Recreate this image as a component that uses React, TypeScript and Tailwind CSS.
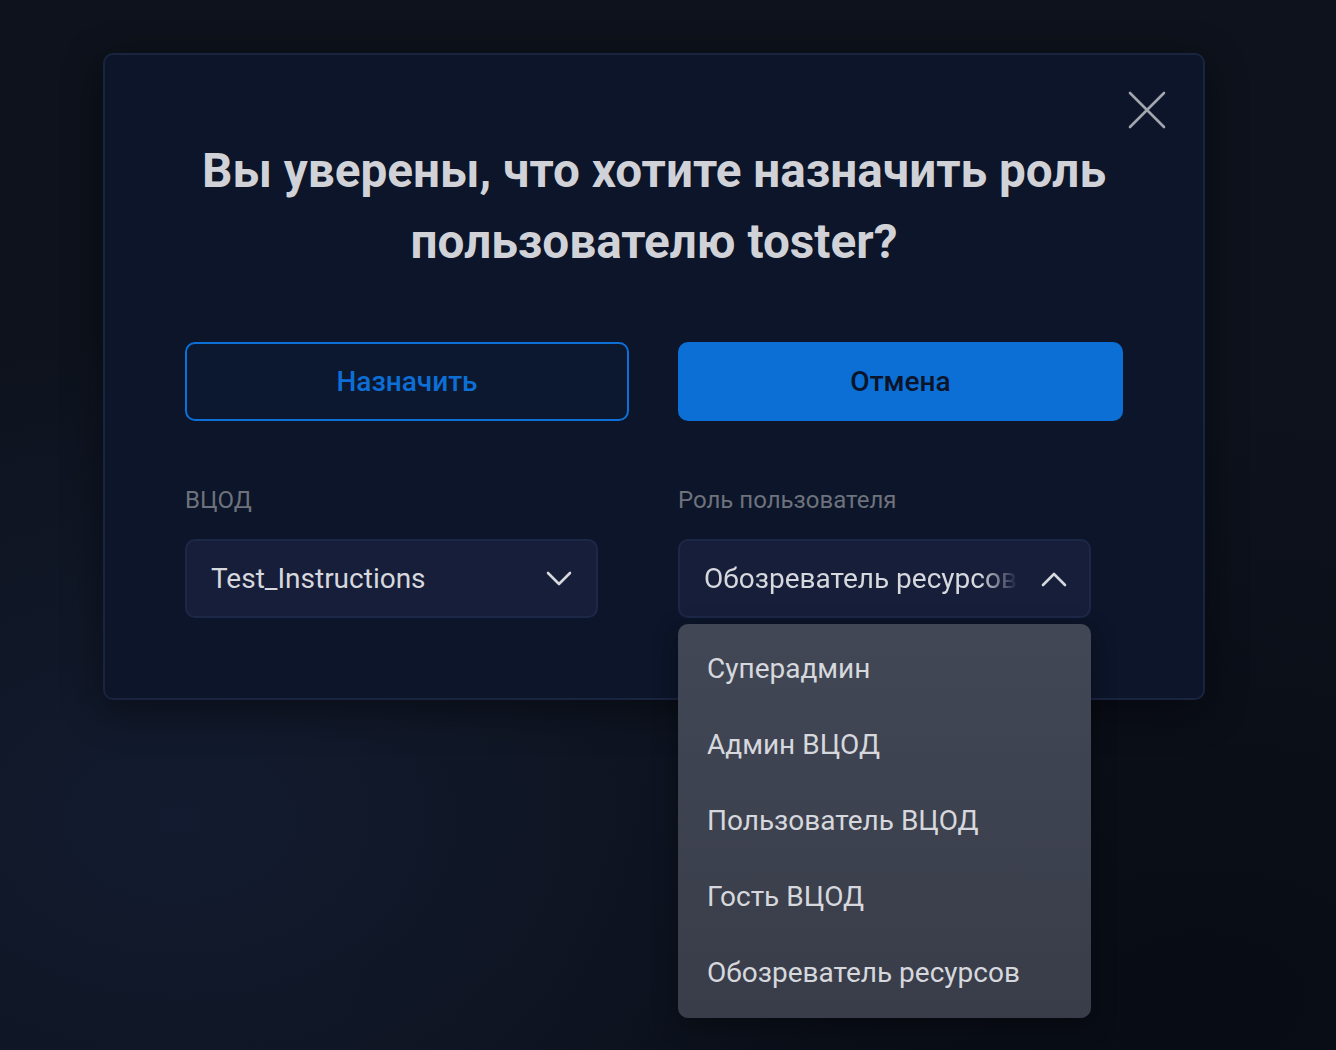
import { useState } from "react";

const roles = [
  "Суперадмин",
  "Админ ВЦОД",
  "Пользователь ВЦОД",
  "Гость ВЦОД",
  "Обозреватель ресурсов",
];

function Chevron({ up = false }: { up?: boolean }) {
  return (
    <svg width="26" height="16" viewBox="0 0 26 16" fill="none" className="shrink-0">
      <path
        d={up ? "M2 14 L13 3 L24 14" : "M2 2 L13 13 L24 2"}
        stroke="#d6d8dd"
        strokeWidth="2.6"
        strokeLinecap="round"
        strokeLinejoin="round"
      />
    </svg>
  );
}

export default function App() {
  const [role, setRole] = useState("Обозреватель ресурсов");
  const [open, setOpen] = useState(true);

  return (
    <div className="min-h-[1050px] w-full bg-[#0d121c] bg-[radial-gradient(ellipse_700px_500px_at_180px_820px,#121b2f_0%,transparent_100%),radial-gradient(ellipse_900px_600px_at_1200px_1000px,#080c15_0%,transparent_100%)] font-['Roboto','Liberation_Sans',sans-serif] pt-[53px] pl-[103px]">
      <div className="relative w-[1102px] rounded-[10px] border-2 border-[#19243f] bg-[#0c1529] px-[80px] pt-[81px] pb-[80px] shadow-[0_10px_40px_rgba(0,0,0,0.45)]">
        <button className="absolute right-[37px] top-[36px] p-0">
          <svg width="38" height="38" viewBox="0 0 38 38" fill="none">
            <path d="M2 2 L36 36 M36 2 L2 36" stroke="#a3a6ad" strokeWidth="2.6" strokeLinecap="round" />
          </svg>
        </button>

        <h2 className="text-center text-[47.7px] font-bold leading-[71px] text-[#d0d2d7]">
          Вы уверены, что хотите назначить роль
          <br />
          пользователю toster?
        </h2>

        <div className="mt-[64px] grid grid-cols-[444px_445px] gap-x-[49px]">
          <button className="h-[79px] rounded-[10px] border-2 border-[#0c70d8] bg-[#0c1830] text-[28px] font-medium text-[#0d6fd6]">
            Назначить
          </button>
          <button className="h-[79px] rounded-[10px] bg-[#0b6fd6] text-[28px] font-medium text-[#0b1428]">
            Отмена
          </button>

          <div className="mt-[66px]">
            <div className="text-[24px] leading-[26px] text-[#6d727c]">ВЦОД</div>
            <button className="mt-[26px] flex h-[79px] w-[413px] items-center justify-between rounded-[10px] border-2 border-[#1d2849] bg-[#171e3a] pl-[24px] pr-[24px] text-[28px] text-[#d6d8dd]">
              <span>Test_Instructions</span>
              <Chevron />
            </button>
          </div>

          <div className="mt-[66px]">
            <div className="text-[24px] leading-[26px] text-[#6d727c]">Роль пользователя</div>
            <div className="relative mt-[26px] w-[413px]">
              <button
                onClick={() => setOpen(!open)}
                className="flex h-[79px] w-full items-center rounded-[10px] border-2 border-[#1d2849] bg-[#171e3a] pl-[24px] pr-[22px] text-[28px] text-[#d6d8dd]"
              >
                <span className="w-[314px] overflow-hidden whitespace-nowrap text-left [mask-image:linear-gradient(to_right,black_88%,transparent_100%)]">
                  {role}
                </span>
                <span className="ml-auto">
                  <Chevron up={open} />
                </span>
              </button>

              {open && (
                <ul className="absolute left-0 top-[85px] z-10 w-[413px] rounded-[10px] bg-gradient-to-b from-[#424756] to-[#393d49] py-[7px] shadow-[0_8px_24px_rgba(0,0,0,0.35)]">
                  {roles.map((r) => (
                    <li
                      key={r}
                      onClick={() => {
                        setRole(r);
                        setOpen(false);
                      }}
                      className="flex h-[76px] cursor-pointer items-center pl-[29px] text-[28px] text-[#d6d8dd]"
                    >
                      {r}
                    </li>
                  ))}
                </ul>
              )}
            </div>
          </div>
        </div>
      </div>
    </div>
  );
}
